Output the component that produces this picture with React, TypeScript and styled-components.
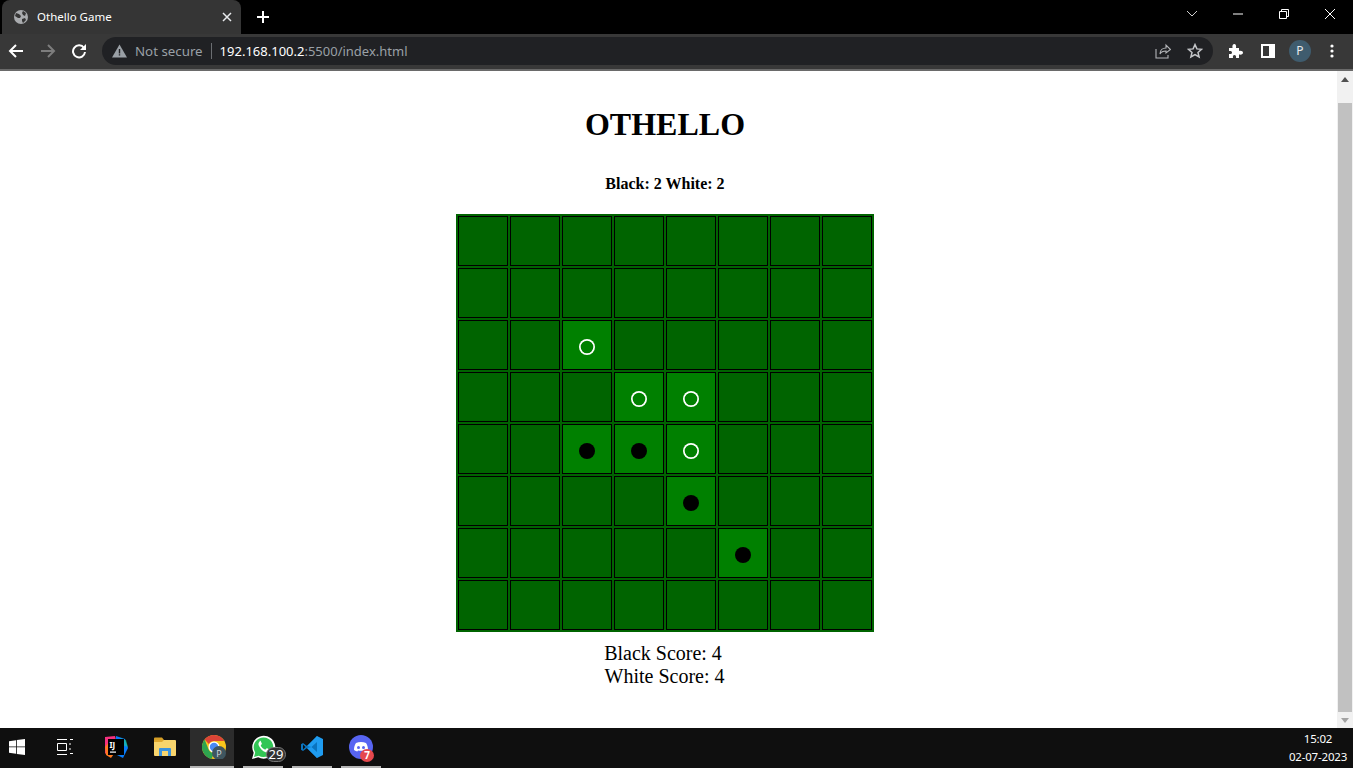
// App.tsx
import styled, { createGlobalStyle } from "styled-components";

const GlobalStyle = createGlobalStyle`
  html, body {
    margin: 0;
    padding: 0;
    height: 100%;
    overflow: hidden;
    background: #fff;
  }
  * {
    box-sizing: border-box;
  }
`;

const UI_FONT = `"Noto Sans", "Open Sans", sans-serif`;

const Screen = styled.div`
  width: 1353px;
  height: 768px;
  display: flex;
  flex-direction: column;
`;

/* browser chrome */
const TabStrip = styled.div`
  height: 34px;
  background: #000;
  display: flex;
  align-items: flex-start;
  padding-left: 2px;
`;

const Tab = styled.div`
  width: 239px;
  height: 34px;
  background: #353535;
  border-radius: 8px 8px 0 0;
  display: flex;
  align-items: center;
  padding: 0 9px 0 12px;
  color: #fff;
  font: 11.5px ${UI_FONT};
`;

const TabTitle = styled.span`
  flex: 1;
  margin: 0 0 2px 9px;
`;

const NewTab = styled.div`
  width: 16px;
  height: 16px;
  margin: 9px 0 0 14px;
  display: flex;
`;

const WindowControls = styled.div`
  margin-left: auto;
  display: flex;
`;

const WindowButton = styled.div`
  width: 46px;
  height: 28px;
  display: flex;
  align-items: center;
  justify-content: center;
`;

const Toolbar = styled.div`
  height: 37px;
  background: #383838;
  border-bottom: 2px solid #6a6a6a;
  display: flex;
  align-items: center;
  padding: 0 5px 2px 0;
`;

const ToolButton = styled.div`
  width: 32px;
  height: 32px;
  display: flex;
  align-items: center;
  justify-content: center;
  flex: none;
`;

const Omnibox = styled.div`
  flex: 1;
  height: 28px;
  margin: 0 6px 0 6px;
  background: #202124;
  border-radius: 14px;
  display: flex;
  align-items: center;
  padding: 0 2px 0 10px;
  font: 13px ${UI_FONT};
  white-space: nowrap;
`;

const NotSecure = styled.span`
  color: #9aa0a6;
  margin-left: 8px;
  padding-right: 8px;
  border-right: 1px solid #6b6e72;
  line-height: 16px;
  font-size: 13.3px;
`;

const Host = styled.span`
  color: #fff;
  margin-left: 8px;
`;

const Path = styled.span`
  color: #9aa0a6;
`;

const OmniboxEnd = styled.div`
  margin-left: auto;
  display: flex;
`;

const ToolGap = styled.div`
  width: 1px;
`;

const Avatar = styled.div`
  width: 22px;
  height: 22px;
  border-radius: 50%;
  background: #3f5c6e;
  color: #e8eaed;
  font: 12px ${UI_FONT};
  display: flex;
  align-items: center;
  justify-content: center;
`;

/* page */
const Viewport = styled.div`
  flex: 1;
  min-height: 0;
  display: flex;
`;

const Page = styled.main`
  flex: 1;
  background: #fff;
  color: #000;
  font-family: "Liberation Serif", "Times New Roman", serif;
  display: flex;
  flex-direction: column;
  align-items: center;
  padding: 35px 7px 0 0;
`;

const Title = styled.h1`
  margin: 0;
  font-size: 32px;
  line-height: 37px;
  font-weight: bold;
`;

const Status = styled.p`
  margin: 32px 0 21px;
  font-size: 16px;
  line-height: 18px;
  font-weight: bold;
`;

const Board = styled.div`
  display: grid;
  grid-template-columns: repeat(8, 50px);
  grid-auto-rows: 50px;
  gap: 2px;
  padding: 2px;
  background: #006400;
`;

const Cell = styled.div<{ $filled: boolean }>`
  border: 1px solid #000;
  background: ${(p) => (p.$filled ? "#008000" : "#006400")};
  display: flex;
  align-items: center;
  justify-content: center;
`;

const Disc = styled.div<{ $white: boolean }>`
  width: 16px;
  height: 16px;
  margin-top: 4px;
  border-radius: 50%;
  background: ${(p) => (p.$white ? "transparent" : "#000")};
  box-shadow: ${(p) => (p.$white ? "inset 0 0 0 1.7px #fff" : "none")};
`;

const Scores = styled.div`
  margin-top: 10px;
  font-size: 20px;
  line-height: 23px;
  text-align: center;
`;

const ScoreLine = styled.div<{ $shift: number }>`
  padding-right: ${(p) => p.$shift}px;
`;

const Scrollbar = styled.div`
  width: 16px;
  background: #f1f1f1;
  display: flex;
  flex-direction: column;
  align-items: stretch;
  padding: 0 1px;
`;

const ScrollArrow = styled.div`
  height: 16px;
  display: flex;
  align-items: center;
  justify-content: center;
  flex: none;
`;

const ScrollThumb = styled.div`
  flex: 1;
  margin-top: 16px;
  background: #c1c1c1;
`;

/* taskbar */
const Taskbar = styled.div`
  height: 40px;
  background: #0f0f0f;
  display: flex;
  align-items: stretch;
`;

const TaskTile = styled.div<{ $w: number; $open?: boolean; $active?: boolean }>`
  position: relative;
  width: ${(p) => p.$w}px;
  flex: none;
  display: flex;
  align-items: center;
  justify-content: center;
  background: ${(p) => (p.$active ? "#2c2c2c" : "transparent")};
  border-bottom: 2px solid ${(p) => (p.$open ? "#b5b5b5" : "transparent")};
`;

const ChromeSlot = styled.div`
  display: flex;
  margin-left: 4px;
`;

const Badge = styled.span`
  position: absolute;
  right: -3px;
  top: 19px;
  width: 20px;
  height: 15px;
  border-radius: 8px;
  background: #333;
  border: 1px solid #777;
  color: #fff;
  font: 13px/13px ${UI_FONT};
  text-align: center;
`;

const RedBadge = styled.span`
  position: absolute;
  right: 7px;
  top: 21px;
  width: 14px;
  height: 13px;
  border-radius: 50%;
  background: #e5484d;
  color: #fff;
  font: bold 10px/13px ${UI_FONT};
  text-align: center;
`;

const Clock = styled.div`
  margin-left: auto;
  width: 70px;
  color: #fff;
  font: 11.5px/18px ${UI_FONT};
  text-align: center;
  padding-top: 2px;
  letter-spacing: -0.2px;
`;

const ICON_STROKE = { fill: "none", strokeWidth: 2 } as const;

const Globe = () => (
  <svg width="14" height="14" viewBox="0 0 14 14">
    <circle cx="7" cy="7" r="7" fill="#a9abae" />
    <path d="M2 3l3 1 2 2-1 2-2 0-3-2zM9 1l3 2-1 3-2-1-1-2zM8 9l3-1 1 2-3 3-1-2z" fill="#353535" />
  </svg>
);

const CloseX = () => (
  <svg width="10" height="10" viewBox="0 0 10 10">
    <path d="M1 1l8 8M9 1l-8 8" stroke="#e8eaed" strokeWidth="1.5" />
  </svg>
);

const PlusIcon = () => (
  <svg width="16" height="16" viewBox="0 0 16 16">
    <path d="M8 2v12M2 8h12" stroke="#fff" strokeWidth="2" />
  </svg>
);

const ArrowIcon = ({ color, flip }: { color: string; flip?: boolean }) => (
  <svg width="16" height="16" viewBox="0 0 16 16" style={flip ? { transform: "scaleX(-1)" } : undefined}>
    <path d="M15 8H2M8 2L2 8l6 6" stroke={color} {...ICON_STROKE} />
  </svg>
);

const ReloadIcon = () => (
  <svg width="16" height="16" viewBox="1 0 16 16">
    <path d="M13 5a6 6 0 1 0 1 4" stroke="#fff" {...ICON_STROKE} />
    <path d="M15 1v6H9z" fill="#fff" />
  </svg>
);

const WarnIcon = () => (
  <svg width="15" height="14" viewBox="0 0 15 14">
    <path d="M7.5 0.5L15 13.5H0z" fill="#9aa0a6" />
    <path d="M6.8 5h1.4v4.4H6.8zM6.8 10.2h1.4v1.4H6.8z" fill="#202124" />
  </svg>
);

const ShareIcon = () => (
  <svg width="16" height="16" viewBox="0 0 16 16" fill="none" stroke="#b4b6b9" strokeWidth="1.1">
    <path d="M1 6v9h12v-3" />
    <path d="M5 11c0-4 3-6 6-6V2l4.5 4.5L11 10V8c-3 0-5 1-6 3z" />
  </svg>
);

const StarIcon = () => (
  <svg width="16" height="16" viewBox="0 0 16 16">
    <path d="M8 1.6l1.9 4.3 4.7.4-3.6 3.1 1.1 4.6L8 11.6 3.900 14l1.100-4.600L1.400 6.300l4.700-.4z" fill="none" stroke="#c4c6c9" strokeWidth="1.5" />
  </svg>
);

const PuzzleIcon = () => (
  <svg width="16" height="16" viewBox="0 0 16 16">
    <path d="M1 5h3.500C4 2.500 5 1 6.300 1s2.200 1.500 1.700 4H11v3c2.500-.5 4 .4 4 1.800S13.500 12 11 11.500V15H8c.4-2-.4-3-1.600-3S4.600 13 5 15H1v-4c2 .4 3-.4 3-1.600S3 7.600 1 8z" fill="#fff" />
  </svg>
);

const SidePanelIcon = () => (
  <svg width="14" height="14" viewBox="0 0 14 14">
    <path d="M0 0h14v14H0zM2 2v10h6V2z" fill="#fff" fillRule="evenodd" />
  </svg>
);

const MenuIcon = () => (
  <svg width="4" height="14" viewBox="0 0 4 14">
    <circle cx="2" cy="2" r="1.600" fill="#fff" />
    <circle cx="2" cy="7" r="1.600" fill="#fff" />
    <circle cx="2" cy="12" r="1.600" fill="#fff" />
  </svg>
);

const ChevronIcon = () => (
  <svg width="12" height="8" viewBox="0 0 12 8">
    <path d="M1 1l5 5 5-5" fill="none" stroke="#d0d0d0" />
  </svg>
);

const MinimiseIcon = () => (
  <svg width="10" height="2" viewBox="0 0 10 2">
    <path d="M0 1h10" stroke="#fff" />
  </svg>
);

const RestoreIcon = () => (
  <svg width="10" height="10" viewBox="0 0 10 10" fill="none" stroke="#fff">
    <path d="M.5 2.500h7v7h-7zM2.500 2.500v-2h7v7h-2" />
  </svg>
);

const WinCloseIcon = () => (
  <svg width="10" height="10" viewBox="0 0 10 10">
    <path d="M0 0l10 10M10 0L0 10" stroke="#fff" />
  </svg>
);

const ScrollUp = () => (
  <svg width="8" height="5" viewBox="0 0 8 5">
    <path d="M4 0l4 5H0z" fill="#505050" />
  </svg>
);

const ScrollDown = () => (
  <svg width="8" height="5" viewBox="0 0 8 5">
    <path d="M0 0h8L4 5z" fill="#a3a3a3" />
  </svg>
);

const WindowsLogo = () => (
  <svg width="16" height="16" viewBox="0 0 16 16">
    <path d="M0 2.200l7-1V7.500H0zM7.800 1.100L16 0v7.500H7.800zM0 8.300h7v6.500l-7-1zM7.800 8.300H16V16l-8.200-1.100z" fill="#fff" />
  </svg>
);

const TaskViewIcon = () => (
  <svg width="16" height="16" viewBox="0 0 16 16" fill="none" stroke="#fff">
    <path d="M0 .5h10M0 15.500h10M.5 4.500h9v7h-9zM13 .5h3M13 4v2M13 9v2M13 14.500h3" />
  </svg>
);

const IntellijIcon = () => (
  <svg width="24" height="24" viewBox="0 0 24 24">
    <path d="M1 2l10-1 2 8-9 12-3-3z" fill="#f5317f" />
    <path d="M1 12l4-5 7 9-5 7-5-3z" fill="#fe7a1f" />
    <path d="M12 1l9 3 3 9-5 10-8-4z" fill="#087cfa" />
    <path d="M16 3l6 2 2 7-6-2z" fill="#21d789" opacity="0.55" />
    <rect x="4" y="4" width="16" height="16" fill="#000" />
    <text x="5.500" y="13" fill="#fff" fontSize="8" fontWeight="bold" fontFamily="Noto Sans, sans-serif">IJ</text>
    <rect x="6" y="16.500" width="6" height="1.200" fill="#fff" />
  </svg>
);

const FolderIcon = () => (
  <svg width="22" height="20" viewBox="0 0 22 20">
    <path d="M0 1.500A1 1 0 0 1 1 .5h7l2 2.500H0z" fill="#d69f27" />
    <path d="M0 3h21a1 1 0 0 1 1 1v14a1 1 0 0 1-1 1H1a1 1 0 0 1-1-1z" fill="#f8d56d" />
    <path d="M0 3h10L8 5H0z" fill="#e0a92f" />
    <path d="M5 19v-7a1 1 0 0 1 1-1h10a1 1 0 0 1 1 1v7h-3v-5H8v5z" fill="#3c93dd" />
  </svg>
);

const ChromeIcon = () => (
  <svg width="24" height="24" viewBox="0 0 24 24">
    <circle cx="12" cy="12" r="12" fill="#f9c51c" />
    <path d="M12 0a12 12 0 0 1 10.400 6H12a6 6 0 0 0-5.200 3L2.600 4.500A12 12 0 0 1 12 0z" fill="#dc4437" />
    <path d="M2.600 4.500L6.800 15a6 6 0 0 0 5.200 3l-2.400 5.800A12 12 0 0 1 2.600 4.500z" fill="#2ea44f" />
    <circle cx="12" cy="12" r="5.500" fill="#fff" />
    <circle cx="12" cy="12" r="4.200" fill="#4a8af4" />
    <circle cx="17" cy="18" r="7" fill="#3f5660" />
    <text x="17" y="21.500" fill="#cfd4d8" fontSize="9" textAnchor="middle" fontFamily="Noto Sans, sans-serif">P</text>
  </svg>
);

const WhatsappIcon = () => (
  <svg width="25" height="25" viewBox="0 0 25 25">
    <path d="M1 24l1.700-6.200A11.500 11.500 0 1 1 7.200 22.300z" fill="#fff" />
    <path d="M3 22l1.200-4.500A9.800 9.800 0 1 1 7.700 20.800z" fill="#32c655" />
    <path d="M8.700 6.500c-1 .8-1.700 2.300-.8 4.300 1.200 2.800 3.800 5.500 6.700 6.400 2 .6 3.500-.3 4-1.500.2-.6.200-1 0-1.200l-2.500-1.200c-.4-.1-.6 0-1.300 1-.3.300-.5.400-1 .1-1.900-.8-3-2-3.900-3.500-.2-.400 0-.6.800-1.600.2-.2.200-.4.100-.7l-1-2.400c-.2-.5-.8-.6-1.100-.5z" fill="#fff" />
  </svg>
);

const VscodeIcon = () => (
  <svg width="24" height="24" viewBox="0 0 24 24">
    <path d="M17 1L7 11 3 8 1 9.200v5.600L3 16l4-3 10 10 2-6V7z" fill="#0a74bf" />
    <path d="M17 1l6 2.900v16.200L17 23l-10-10 4.500-1L17 17V7l-5.500 5L7 11z" fill="#1f9cf0" />
    <path d="M3 9.500L5.500 12 3 14.500z" fill="#0f0f0f" />
  </svg>
);

const DiscordIcon = () => (
  <svg width="24" height="24" viewBox="0 0 24 24">
    <circle cx="12" cy="12" r="12" fill="#5865f2" />
    <path d="M7 8c3-1.300 7-1.300 10 0 1.300 2 2 4.300 2 7-1.200.9-2.300 1.300-3.300 1.600l-.8-1.200c-1.900.6-3.900.6-5.800 0l-.8 1.200c-1-.3-2.100-.7-3.300-1.600 0-2.700.7-5 2-7z" fill="#fff" />
    <circle cx="9.500" cy="12.500" r="1.500" fill="#5865f2" />
    <circle cx="14.500" cy="12.500" r="1.500" fill="#5865f2" />
  </svg>
);

const rows = [
  "........",
  "........",
  "..w.....",
  "...ww...",
  "..bbw...",
  "....b...",
  ".....b..",
  "........",
];

const App = () => {
  return (
    <Screen>
      <GlobalStyle />
      <TabStrip>
        <Tab>
          <Globe />
          <TabTitle>Othello Game</TabTitle>
          <CloseX />
        </Tab>
        <NewTab>
          <PlusIcon />
        </NewTab>
        <WindowControls>
          <WindowButton><ChevronIcon /></WindowButton>
          <WindowButton><MinimiseIcon /></WindowButton>
          <WindowButton><RestoreIcon /></WindowButton>
          <WindowButton><WinCloseIcon /></WindowButton>
        </WindowControls>
      </TabStrip>
      <Toolbar>
        <ToolButton><ArrowIcon color="#fff" /></ToolButton>
        <ToolButton><ArrowIcon color="#7d7d7d" flip /></ToolButton>
        <ToolButton><ReloadIcon /></ToolButton>
        <Omnibox>
          <WarnIcon />
          <NotSecure>Not secure</NotSecure>
          <Host>192.168.100.2</Host>
          <Path>:5500/index.html</Path>
          <OmniboxEnd>
            <ToolButton><ShareIcon /></ToolButton>
            <ToolButton><StarIcon /></ToolButton>
          </OmniboxEnd>
        </Omnibox>
        <ToolGap />
        <ToolButton><PuzzleIcon /></ToolButton>
        <ToolButton><SidePanelIcon /></ToolButton>
        <ToolButton><Avatar>P</Avatar></ToolButton>
        <ToolButton><MenuIcon /></ToolButton>
      </Toolbar>
      <Viewport>
        <Page>
          <Title>OTHELLO</Title>
          <Status>Black: 2 White: 2</Status>
          <Board>
            {rows.map((row, y) =>
              row.split("").map((c, x) => (
                <Cell key={`${x}-${y}`} $filled={c !== "."}>
                  {c !== "." && <Disc $white={c === "w"} />}
                </Cell>
              ))
            )}
          </Board>
          <Scores>
            <ScoreLine $shift={4}>Black Score: 4</ScoreLine>
            <ScoreLine $shift={1}>White Score: 4</ScoreLine>
          </Scores>
        </Page>
        <Scrollbar>
          <ScrollArrow><ScrollUp /></ScrollArrow>
          <ScrollThumb />
          <ScrollArrow><ScrollDown /></ScrollArrow>
        </Scrollbar>
      </Viewport>
      <Taskbar>
        <TaskTile $w={34}><WindowsLogo /></TaskTile>
        <TaskTile $w={14} />
        <TaskTile $w={34}><TaskViewIcon /></TaskTile>
        <TaskTile $w={17} />
        <TaskTile $w={34}><IntellijIcon /></TaskTile>
        <TaskTile $w={15} />
        <TaskTile $w={34}><FolderIcon /></TaskTile>
        <TaskTile $w={8} />
        <TaskTile $w={44} $open $active><ChromeSlot><ChromeIcon /></ChromeSlot></TaskTile>
        <TaskTile $w={9} />
        <TaskTile $w={40} $open>
          <WhatsappIcon />
          <Badge>29</Badge>
        </TaskTile>
        <TaskTile $w={9} />
        <TaskTile $w={40} $open><VscodeIcon /></TaskTile>
        <TaskTile $w={9} />
        <TaskTile $w={40} $open>
          <DiscordIcon />
          <RedBadge>7</RedBadge>
        </TaskTile>
        <Clock>
          <div>15:02</div>
          <div>02-07-2023</div>
        </Clock>
      </Taskbar>
    </Screen>
  );
};

export default App;
